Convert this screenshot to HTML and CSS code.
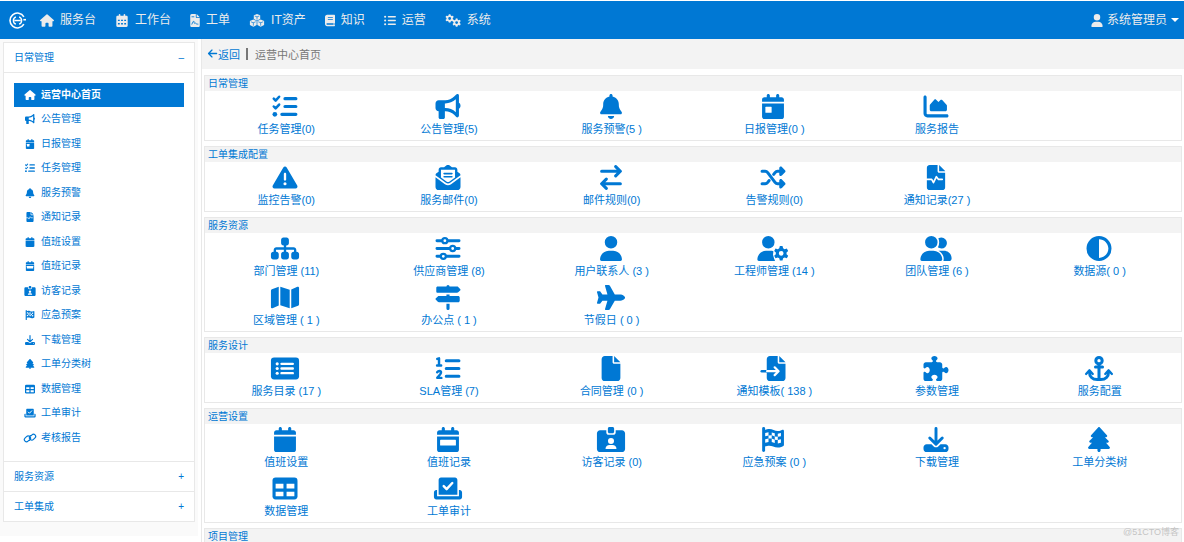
FILE: index.html
```html
<!DOCTYPE html>
<html lang="zh-CN">
<head>
<meta charset="utf-8">
<title>运营中心首页</title>
<link rel="stylesheet" href="styles.css">
</head>
<body>
<svg class="sprite" aria-hidden="true">
  <symbol id="logo" viewBox="0 0 32 32"><g fill="none" stroke="currentColor" stroke-width="3"><path d="M28 9A14 14 0 1 0 28 23"/><path d="M13 9a7.500 7.500 0 0 0 0 14M19 9a7.500 7.500 0 0 1 0 14M10 16h12" stroke-width="2.500"/></g><path d="M27 13h5v3h-5z" fill="currentColor"/></symbol>
  <symbol id="home" viewBox="0 0 576 512"><path d="M544 288h-32v184a40 40 0 0 1-40 40h-88a32 32 0 0 1-32-32v-96a32 32 0 0 0-32-32h-64a32 32 0 0 0-32 32v96a32 32 0 0 1-32 32h-88a40 40 0 0 1-40-40v-184h-32c-30 0-43-38-21-56l256-224a32 32 0 0 1 42 0l256 224c22 18 9 56-21 56z"/></symbol>
  <symbol id="horn" viewBox="0 0 512 512"><path d="M480 32c0-12.900-7.800-24.600-19.800-29.600s-25.700-2.200-34.900 6.900L381.700 53c-48 48-113.100 75-181 75H64c-35.300 0-64 28.700-64 64v96c0 35.300 28.700 64 64 64v128c0 17.700 14.300 32 32 32h64c17.700 0 32-14.300 32-32V352h8.700c67.900 0 133 27 181 75l43.600 43.600c9.200 9.200 22.900 11.900 34.900 6.900s19.800-16.600 19.800-29.600V300.400c18.600-8.800 32-32.500 32-60.400s-13.400-51.600-32-60.400V32zm-64 76.700V371.300C357.200 317.800 280.500 288 200.700 288H192V192h8.700c79.800 0 156.500-29.800 215.300-83.300z"/></symbol>
  <symbol id="tasks" viewBox="0 0 512 512"><path class="line" stroke-width="52" d="M26 96l38 40 72-80M26 256l38 40 72-80"/><circle cx="48" cy="416" r="48"/><path class="line" stroke-width="66" d="M256 96h222M256 256h222M192 416h286"/></symbol>
  <symbol id="bell" viewBox="0 0 448 512"><path d="M224 0c-17.700 0-32 14.300-32 32V51.200C119 66 64 130.600 64 208v18.800c0 47-17.300 92.400-48.500 127.600l-7.400 8.300c-8.400 9.400-10.400 22.900-5.300 34.400S19.400 416 32 416H416c12.600 0 24-7.400 29.200-18.900s3.100-25-5.300-34.400l-7.400-8.300C401.300 319.200 384 273.900 384 226.800V208c0-77.400-55-142-128-156.800V32c0-17.700-14.300-32-32-32zm45.300 493.300c12-12 18.700-28.300 18.700-45.300H160c0 17 6.700 33.300 18.700 45.300s28.300 18.700 45.300 18.700s33.300-6.700 45.300-18.700z"/></symbol>
  <symbol id="cal" viewBox="0 0 448 512"><path d="M96 32V64H48C21.500 64 0 85.500 0 112v48H448V112c0-26.500-21.500-48-48-48H352V32c0-17.700-14.300-32-32-32s-32 14.300-32 32V64H160V32c0-17.700-14.300-32-32-32S96 14.300 96 32zM448 192H0V464c0 26.500 21.500 48 48 48H400c26.500 0 48-21.500 48-48V192z"/></symbol>
  <symbol id="calday" viewBox="0 0 448 512"><use href="#cal" width="448" height="512"/><rect class="hole" x="68" y="262" width="128" height="124" rx="12"/></symbol>
  <symbol id="calweek" viewBox="0 0 448 512"><use href="#cal" width="448" height="512"/><rect class="hole" x="62" y="260" width="324" height="120" rx="12"/></symbol>
  <symbol id="calgrid" viewBox="0 0 448 512"><path d="M96 32V64H48C21.500 64 0 85.500 0 112v48H448V112c0-26.500-21.500-48-48-48H352V32c0-17.700-14.300-32-32-32s-32 14.300-32 32V64H160V32c0-17.700-14.300-32-32-32S96 14.300 96 32zM0 160h448V464c0 26-22 48-48 48H48c-26 0-48-22-48-48z"/><path class="bar-hole" d="M64 224h72v56H64zM188 224h72v56h-72zM312 224h72v56h-72zM64 354h72v56H64zM188 354h72v56h-72zM312 354h72v56h-72z"/></symbol>
  <symbol id="chart" viewBox="0 0 512 512"><path d="M64 64c0-17.700-14.300-32-32-32S0 46.300 0 64V400c0 44.200 35.800 80 80 80H480c17.700 0 32-14.300 32-32s-14.300-32-32-32H80c-8.800 0-16-7.200-16-16V64zM128 320v-84c0-7 2-13 7-19l85-99c10-11 28-12 39-1l47 47 41-41c10-10 27-10 36 1l93 101c3 5 4 11 4 17v78c0 18-14 32-32 32H160c-18 0-32-14-32-32z"/></symbol>
  <symbol id="warn" viewBox="0 0 512 512"><path d="M256 32c14.200 0 27.300 7.500 34.500 19.800l216 368c7.300 12.400 7.300 27.700 .2 40.100S486.300 480 472 480H40c-14.300 0-27.600-7.700-34.700-20.100s-7-27.800 .2-40.100l216-368C228.700 39.500 241.800 32 256 32zm0 128c-13.300 0-24 10.700-24 24V296c0 13.300 10.700 24 24 24s24-10.700 24-24V184c0-13.300-10.700-24-24-24zm32 224a32 32 0 1 0-64 0 32 32 0 1 0 64 0z"/></symbol>
  <symbol id="mail" viewBox="0 0 512 512"><path d="M215 14a64 64 0 0 1 82 0l40 34h63c26 0 48 22 48 48v40l45 35c12 9 19 23 19 37L300 365c-26 20-62 20-88 0L0 208c0-14 7-28 19-37l45-35V96c0-26 22-48 48-48h63zM0 250l193 142c37 28 89 28 126 0l193-142v198c0 35-29 64-64 64H64c-35 0-64-29-64-64z"/><path class="hole" d="M112 96h288v158L281 342c-15 11-35 11-50 0L112 254z"/><path class="line" stroke-width="32" d="M176 176h160M176 240h160"/></symbol>
  <symbol id="swap" viewBox="0 0 448 512"><path class="line" stroke-width="62" d="M32 128h376M320 32l96 96-96 96M416 384H40M128 288l-96 96 96 96"/></symbol>
  <symbol id="shuffle" viewBox="0 0 512 512"><path class="line" stroke-width="62" d="M32 128h64c22 0 38 10 52 28l150 200c14 18 30 28 52 28h112M32 384h64c22 0 38-10 52-28l28-38M270 192l28-36c14-18 30-28 52-28h112"/><path d="M384 64c0-28 34-42 54-22l64 64c13 12 13 32 0 45l-64 64c-20 20-54 6-54-23zM384 320c0-28 34-42 54-22l64 64c13 12 13 32 0 45l-64 64c-20 20-54 6-54-23z"/></symbol>
  <symbol id="file" viewBox="0 0 384 512"><path d="M0 64C0 28.700 28.700 0 64 0H224V128c0 17.700 14.300 32 32 32H384V448c0 35.300-28.700 64-64 64H64c-35.300 0-64-28.700-64-64zM384 128H256V0z"/></symbol>
  <symbol id="filewave" viewBox="0 0 384 512"><use href="#file" width="384" height="512"/><path class="line hole-line" stroke-width="34" d="M0 296h104l36 66 60-122 44 56h76"/></symbol>
  <symbol id="filesign" viewBox="0 0 384 512"><use href="#file" width="384" height="512"/><path class="line bar-line" stroke-width="34" d="M70 400c50-130 84-150 84-80 0 60 30 60 54 30 14 36 50 50 100 50M70 110h80"/></symbol>
  <symbol id="fileimport" viewBox="0 0 512 512"><path d="M128 64c0-35 29-64 64-64h160v128c0 18 14 32 32 32h128v288c0 35-29 64-64 64H192c-35 0-64-29-64-64zM512 128H384V0z"/><path class="line" stroke-width="48" d="M24 312h104"/><path class="line hole-line" stroke-width="46" d="M136 312h216M290 232l80 80-80 80"/></symbol>
  <symbol id="sitemap" viewBox="0 0 576 512"><path d="M208 80c0-27 21-48 48-48h64c27 0 48 21 48 48v64c0 27-21 48-48 48h-8v40h152c31 0 56 25 56 56v32h8c27 0 48 21 48 48v64c0 27-21 48-48 48h-64c-27 0-48-21-48-48v-64c0-27 21-48 48-48h8v-32c0-4-4-8-8-8H312v40h8c27 0 48 21 48 48v64c0 27-21 48-48 48h-64c-27 0-48-21-48-48v-64c0-27 21-48 48-48h8v-40H112c-4 0-8 4-8 8v32h8c27 0 48 21 48 48v64c0 27-21 48-48 48H48c-27 0-48-21-48-48v-64c0-27 21-48 48-48h8v-32c0-31 25-56 56-56h152v-40h-8c-27 0-48-21-48-48z"/></symbol>
  <symbol id="sliders" viewBox="0 0 512 512"><path class="line" stroke-width="60" d="M30 96h452M30 256h452M30 416h452"/><g class="hole ring" stroke-width="46"><circle cx="192" cy="96" r="52"/><circle cx="352" cy="256" r="52"/><circle cx="160" cy="416" r="52"/></g></symbol>
  <symbol id="user" viewBox="0 0 448 512"><path d="M224 256A128 128 0 1 0 224 0a128 128 0 1 0 0 256zm-45.700 48C79.800 304 0 383.800 0 482.300C0 498.700 13.300 512 29.700 512H418.300c16.400 0 29.700-13.300 29.700-29.700C448 383.800 368.200 304 269.700 304H178.300z"/></symbol>
  <symbol id="gear" viewBox="0 0 100 100"><path fill-rule="evenodd" d="M41 2h18l4 15 10 6 15-5 9 16-11 11v11l11 11-9 16-15-5-10 6-4 14H41l-4-14-10-6-15 5-9-16 11-11V45L3 34l9-16 15 5 10-6zM50 34a16 16 0 1 0 0 32 16 16 0 1 0 0-32z"/></symbol>
  <symbol id="usergear" viewBox="0 0 640 512"><path d="M224 256A128 128 0 1 0 224 0a128 128 0 1 0 0 256zM178 304h92c20 0 40 3 58 10l-8 68 22 78 20 52H30c-17 0-30-13-30-30 0-98 80-178 178-178z"/><use href="#gear" x="335" y="195" width="305" height="317"/></symbol>
  <symbol id="users" viewBox="0 0 640 512"><path d="M224 256A128 128 0 1 0 224 0a128 128 0 1 0 0 256zm-46 48C80 304 0 384 0 482c0 17 13 30 30 30h388c17 0 30-13 30-30 0-98-80-178-178-178zM368 48c22-12 44-16 64-16a112 112 0 1 1 0 224c-28 0-54-10-72-24 32-62 32-126 8-184zM370 304h115c86 0 155 70 155 155 0 28-21 53-48 53H472c22-84-18-160-102-208z"/></symbol>
  <symbol id="half" viewBox="0 0 512 512"><path fill-rule="evenodd" d="M448 256c0-106-86-192-192-192V448c106 0 192-86 192-192zM0 256a256 256 0 1 1 512 0A256 256 0 1 1 0 256z"/></symbol>
  <symbol id="map" viewBox="0 0 576 512"><path d="M160 34v384L34 476c-16 7-34-4-34-22V120c0-14 8-26 20-31zM192 34l192 62v382l-192-62zM416 94L542 36c16-7 34 4 34 22v334c0 14-8 26-20 31L416 478z"/></symbol>
  <symbol id="signs" viewBox="0 0 512 512"><path d="M224 32a32 32 0 0 1 64 0h154c8 0 17 3 23 9l39 39c10 9 10 23 0 32l-39 39c-6 6-15 9-23 9H48c-26 0-32-10-32-32V64c0-22 10-32 32-32zM224 192h64v32h176c18 0 32 14 32 32v64c0 18-14 32-32 32H70c-8 0-17-3-23-9L8 304c-10-9-10-23 0-32l39-39c6-6 15-9 23-9h154zM224 384h64v96a32 32 0 0 1-64 0z"/></symbol>
  <symbol id="plane" viewBox="0 0 576 512"><path d="M482.300 192c34.200 0 93.700 29 93.700 64c0 36-59.500 64-93.700 64H365.700L265.200 495.900c-5.700 10-16.300 16.100-27.800 16.100h-56.200c-10.600 0-18.300-10.200-15.400-20.400l49-171.600H112L68.800 377.600c-3 4-7.800 6.400-12.800 6.400H14c-7.800 0-14-6.300-14-14c0-1.300 .2-2.600 .5-3.900L32 256 .5 145.900C.1 144.600 0 143.300 0 142c0-7.800 6.300-14 14-14h42c5 0 9.800 2.400 12.800 6.400L112 192h102.900L165.900 20.400C162.900 10.200 170.600 0 181.200 0h56.200c11.500 0 22.100 6.200 27.800 16.100L365.700 192z"/></symbol>
  <symbol id="catalog" viewBox="0 0 576 512"><rect y="32" width="576" height="448" rx="64"/><g class="hole"><circle cx="128" cy="160" r="32"/><circle cx="128" cy="256" r="32"/><circle cx="128" cy="352" r="32"/></g><path class="line hole-line" stroke-width="48" d="M216 160h232M216 256h232M216 352h232"/></symbol>
  <symbol id="numlist" viewBox="0 0 512 512"><path class="line" stroke-width="62" d="M220 96h260M220 256h260M220 416h260"/><path class="line" stroke-width="50" d="M36 60l36-12v144M32 196h84M34 332c30-42 84-30 78 12-2 20-20 34-76 104h84"/></symbol>
  <symbol id="puzzle" viewBox="0 0 512 512"><path d="M192 104.800c0-9.200-5.800-17.300-13.200-22.800C167.200 73.300 160 61.300 160 48c0-26.500 28.700-48 64-48s64 21.500 64 48c0 13.300-7.200 25.300-18.800 34c-7.400 5.500-13.200 13.600-13.200 22.800c0 12.800 10.400 23.200 23.200 23.200H336c26.500 0 48 21.500 48 48v56.800c0 12.800 10.400 23.200 23.200 23.200c9.200 0 17.300-5.800 22.800-13.200c8.700-11.600 20.700-18.800 34-18.800c26.500 0 48 28.700 48 64s-21.500 64-48 64c-13.300 0-25.300-7.200-34-18.800c-5.500-7.400-13.600-13.200-22.800-13.200c-12.800 0-23.200 10.400-23.200 23.200V464c0 26.500-21.500 48-48 48H279.200c-12.800 0-23.200-10.400-23.200-23.200c0-9.200 5.800-17.300 13.200-22.800c11.600-8.700 18.800-20.700 18.800-34c0-26.500-28.700-48-64-48s-64 21.500-64 48c0 13.300 7.200 25.300 18.800 34c7.400 5.500 13.200 13.600 13.200 22.800c0 12.800-10.400 23.200-23.200 23.200H48c-26.500 0-48-21.500-48-48V343.200C0 330.400 10.400 320 23.200 320c9.200 0 17.300 5.800 22.800 13.200C54.700 344.800 66.700 352 80 352c26.500 0 48-28.700 48-64s-21.500-64-48-64c-13.300 0-25.300 7.200-34 18.800C40.500 250.200 32.400 256 23.200 256C10.400 256 0 245.600 0 232.800V176c0-26.500 21.500-48 48-48H168.800c12.800 0 23.200-10.400 23.200-23.200z"/></symbol>
  <symbol id="anchor" viewBox="0 0 576 512"><circle class="ring" fill="none" stroke-width="62" cx="288" cy="96" r="65"/><path class="line" stroke-width="62" d="M288 170v306M216 224h144M92 320c0 100 60 160 160 160h72c100 0 160-60 160-160"/><path class="line" stroke-width="48" d="M24 368l68-74 68 74M416 368l68-74 68 74"/></symbol>
  <symbol id="badge" viewBox="0 0 576 512"><path d="M256 0h64c18 0 32 14 32 32v64c0 18-14 32-32 32h-64c-18 0-32-14-32-32V32c0-18 14-32 32-32zM64 64h128v48c0 26 22 48 48 48h96c26 0 48-22 48-48V64h128c35 0 64 29 64 64v320c0 35-29 64-64 64H64c-35 0-64-29-64-64V128c0-35 29-64 64-64z"/><g class="hole"><circle cx="288" cy="288" r="62"/><path d="M176 448c0-44 36-78 80-78h64c44 0 80 34 80 78z"/></g></symbol>
  <symbol id="flag" viewBox="0 0 448 512"><path class="line" stroke-width="60" d="M32 32v448"/><path d="M32 64l70-17c45-11 92-6 134 15 46 23 100 26 148 8l32-12c16-8 32 4 32 22v286c0 14-8 26-21 30l-34 13c-54 20-114 17-166-8-38-20-82-24-124-14L32 404z"/><path class="hole" d="M64 122l68-16v66l-68 16zM132 172l66-3v67l-66 2zM198 112l62 18v66l-62-27zM260 196l62 6v66l-62-8zM322 138l64-14v66l-64 12zM64 250l68-12v68l-68 14zM198 236l62 24v66l-62-20zM322 268l64-16v68l-64 16z"/></symbol>
  <symbol id="download" viewBox="0 0 512 512"><path class="line" stroke-width="60" d="M256 32v300M128 224l128 126 128-126"/><path d="M64 352h100l46 46c26 24 66 24 92 0l46-46h100c35 0 64 29 64 64v32c0 35-29 64-64 64H64c-35 0-64-29-64-64v-32c0-35 29-64 64-64z"/><circle class="hole" cx="432" cy="432" r="24"/></symbol>
  <symbol id="tree" viewBox="0 0 448 512"><path d="M210.600 5.900L62 169.400c-3.900 4.200-6 9.800-6 15.500C56 197.700 66.300 208 79.100 208H104L30.600 281.400c-4.200 4.200-6.600 10-6.600 16C24 309.900 34.100 320 46.600 320H80L5.400 409.500C1.900 413.700 0 419 0 424.500c0 13 10.500 23.500 23.500 23.500H192v32c0 17.700 14.300 32 32 32s32-14.300 32-32V448H424.500c13 0 23.500-10.500 23.500-23.500c0-5.500-1.900-10.800-5.400-15L368 320h33.400c12.500 0 22.600-10.100 22.600-22.600c0-6-2.400-11.800-6.600-16L344 208h24.900c12.700 0 23.100-10.300 23.100-23.100c0-5.700-2.100-11.300-6-15.500L237.400 5.900C234 2.100 229.100 0 224 0s-10 2.100-13.400 5.900z"/></symbol>
  <symbol id="table" viewBox="0 0 512 512"><rect y="32" width="512" height="448" rx="64"/><path class="hole" d="M64 160h160v96H64zM288 160h160v96H288zM64 320h160v96H64zM288 320h160v96H288z"/></symbol>
  <symbol id="audit" viewBox="0 0 576 512"><path d="M96 80c0-26 22-48 48-48h288c26 0 48 22 48 48v304H96zM0 336c0-26 22-48 48-48h16v128h448V288h16c26 0 48 22 48 48v96c0 26-22 48-48 48H48c-26 0-48-22-48-48z"/><path class="line hole-line" stroke-width="50" d="M200 208l60 60 116-124"/></symbol>
  <symbol id="link" viewBox="0 0 640 512"><path class="line" stroke-width="60" d="M302 174c-54-44-122-30-160 8L64 260c-44 44-44 112 0 156s112 44 156 0l36-36M338 338c54 44 122 30 160-8l78-78c44-44 44-112 0-156s-112-44-156 0l-36 36M302 174c56 40 70 116 22 168l-40 40M338 338c-56-40-70-116-22-168l40-40"/></symbol>
  <symbol id="cubes" viewBox="0 0 576 512"><path d="M288 0l126 48v152l-126 56-126-56V48zM144 220l130 56v160l-130 68-136-68V276zM432 220l136 56v160l-136 68-130-68V276z"/><path class="line bar-line" stroke-width="26" d="M210 84l78 32 78-32M288 116v90M58 312l86 34 80-34M144 346v100M352 312l80 34 86-34M432 346v100"/></symbol>
  <symbol id="book" viewBox="0 0 448 512"><path fill-rule="evenodd" d="M96 0h320c18 0 32 14 32 32v320c0 14-10 26-22 30v66c30 8 30 64-10 64H96c-53 0-96-43-96-96V96C0 43 43 0 96 0zm0 384c-44 0-44 64 0 64h288v-64zM128 112v32h224v-32zM128 200v32h224v-32z"/></symbol>
  <symbol id="list" viewBox="0 0 512 512"><circle cx="48" cy="96" r="46"/><circle cx="48" cy="256" r="46"/><circle cx="48" cy="416" r="46"/><path class="line" stroke-width="60" d="M190 96h290M190 256h290M190 416h290"/></symbol>
  <symbol id="gears" viewBox="0 0 640 512"><use href="#gear" x="0" y="0" width="370" height="350"/><use href="#gear" x="290" y="162" width="350" height="350"/></symbol>
  <symbol id="back" viewBox="0 0 448 512"><path class="line" stroke-width="60" d="M200 96L40 256l160 160M48 256h368"/></symbol>
</svg>

<header class="topbar">
  <svg class="logo"><use href="#logo"/></svg>
  <nav class="nav">
    <a href="#"><svg class="i14"><use href="#home"/></svg>服务台</a>
    <a href="#"><svg class="i14"><use href="#calgrid"/></svg>工作台</a>
    <a href="#"><svg class="i10"><use href="#filesign"/></svg>工单</a>
    <a href="#"><svg class="i16"><use href="#cubes"/></svg>IT资产</a>
    <a href="#"><svg class="i10"><use href="#book"/></svg>知识</a>
    <a href="#"><svg class="i12"><use href="#list"/></svg>运营</a>
    <a href="#"><svg class="i16"><use href="#gears"/></svg>系统</a>
  </nav>
  <button class="account" type="button"><svg class="i12"><use href="#user"/></svg>系统管理员<span class="caret"></span></button>
</header>

<div class="page">
  <aside class="side">
    <div class="accordion">
      <button class="group" type="button">日常管理<span>–</span></button>
      <ul class="menu">
        <li><a class="active" href="#"><svg><use href="#home"/></svg>运营中心首页</a></li>
        <li><a href="#"><svg><use href="#horn"/></svg>公告管理</a></li>
        <li><a href="#"><svg><use href="#calday"/></svg>日报管理</a></li>
        <li><a href="#"><svg><use href="#tasks"/></svg>任务管理</a></li>
        <li><a href="#"><svg><use href="#bell"/></svg>服务预警</a></li>
        <li><a href="#"><svg><use href="#filewave"/></svg>通知记录</a></li>
        <li><a href="#"><svg><use href="#cal"/></svg>值班设置</a></li>
        <li><a href="#"><svg><use href="#calweek"/></svg>值班记录</a></li>
        <li><a href="#"><svg><use href="#badge"/></svg>访客记录</a></li>
        <li><a href="#"><svg><use href="#flag"/></svg>应急预案</a></li>
        <li><a href="#"><svg><use href="#download"/></svg>下载管理</a></li>
        <li><a href="#"><svg><use href="#tree"/></svg>工单分类树</a></li>
        <li><a href="#"><svg><use href="#table"/></svg>数据管理</a></li>
        <li><a href="#"><svg><use href="#audit"/></svg>工单审计</a></li>
        <li><a href="#"><svg><use href="#link"/></svg>考核报告</a></li>
      </ul>
      <button class="group" type="button">服务资源<span>+</span></button>
      <button class="group" type="button">工单集成<span>+</span></button>
    </div>
  </aside>

  <main class="main">
    <div class="crumbs"><a href="#"><svg><use href="#back"/></svg>返回</a><i></i><span>运营中心首页</span></div>
    <div class="panels">
      <section class="panel"><h2>日常管理</h2><div class="tiles">
        <a href="#"><svg><use href="#tasks"/></svg>任务管理(0)</a>
        <a href="#"><svg><use href="#horn"/></svg>公告管理(5)</a>
        <a href="#"><svg><use href="#bell"/></svg>服务预警(5 )</a>
        <a href="#"><svg><use href="#calday"/></svg>日报管理(0 )</a>
        <a href="#"><svg><use href="#chart"/></svg>服务报告</a>
      </div></section>
      <section class="panel"><h2>工单集成配置</h2><div class="tiles">
        <a href="#"><svg><use href="#warn"/></svg>监控告警(0)</a>
        <a href="#"><svg><use href="#mail"/></svg>服务邮件(0)</a>
        <a href="#"><svg><use href="#swap"/></svg>邮件规则(0)</a>
        <a href="#"><svg><use href="#shuffle"/></svg>告警规则(0)</a>
        <a href="#"><svg><use href="#filewave"/></svg>通知记录(27 )</a>
      </div></section>
      <section class="panel"><h2>服务资源</h2><div class="tiles">
        <a href="#"><svg><use href="#sitemap"/></svg>部门管理 (11)</a>
        <a href="#"><svg><use href="#sliders"/></svg>供应商管理 (8)</a>
        <a href="#"><svg><use href="#user"/></svg>用户联系人 (3 )</a>
        <a href="#"><svg><use href="#usergear"/></svg>工程师管理 (14 )</a>
        <a href="#"><svg><use href="#users"/></svg>团队管理 (6 )</a>
        <a href="#"><svg><use href="#half"/></svg>数据源( 0 )</a>
        <a href="#"><svg><use href="#map"/></svg>区域管理 ( 1 )</a>
        <a href="#"><svg><use href="#signs"/></svg>办公点 ( 1 )</a>
        <a href="#"><svg><use href="#plane"/></svg>节假日 ( 0 )</a>
      </div></section>
      <section class="panel"><h2>服务设计</h2><div class="tiles">
        <a href="#"><svg><use href="#catalog"/></svg>服务目录 (17 )</a>
        <a href="#"><svg><use href="#numlist"/></svg>SLA管理 (7)</a>
        <a href="#"><svg><use href="#file"/></svg>合同管理 (0 )</a>
        <a href="#"><svg><use href="#fileimport"/></svg>通知模板( 138 )</a>
        <a href="#"><svg><use href="#puzzle"/></svg>参数管理</a>
        <a href="#"><svg><use href="#anchor"/></svg>服务配置</a>
      </div></section>
      <section class="panel"><h2>运营设置</h2><div class="tiles">
        <a href="#"><svg><use href="#cal"/></svg>值班设置</a>
        <a href="#"><svg><use href="#calweek"/></svg>值班记录</a>
        <a href="#"><svg><use href="#badge"/></svg>访客记录 (0)</a>
        <a href="#"><svg><use href="#flag"/></svg>应急预案 (0 )</a>
        <a href="#"><svg><use href="#download"/></svg>下载管理</a>
        <a href="#"><svg><use href="#tree"/></svg>工单分类树</a>
        <a href="#"><svg><use href="#table"/></svg>数据管理</a>
        <a href="#"><svg><use href="#audit"/></svg>工单审计</a>
      </div></section>
      <section class="panel"><h2>项目管理</h2></section>
    </div>
  </main>
</div>
<div class="watermark">@51CTO博客</div>
</body>
</html>
```
FILE: styles.css
```css
* { box-sizing: border-box; }

:root {
  --blue: #0078d4;
  --line: #e8e8e8;
  --grey: #f3f3f3;
}

body {
  margin: 0;
  height: 100vh;
  overflow: hidden;
  display: flex;
  flex-direction: column;
  background: #fff;
  color: var(--blue);
  font-family: "Liberation Sans", "Noto Sans CJK SC", sans-serif;
  font-size: 11px;
}

a { color: inherit; text-decoration: none; }

button {
  border: 0;
  padding: 0;
  background: none;
  color: inherit;
  font: inherit;
  cursor: pointer;
}

svg { display: block; flex: none; fill: currentColor; }
.sprite { position: absolute; width: 0; height: 0; }
.line { fill: none; stroke: currentColor; stroke-linecap: round; stroke-linejoin: round; }
.ring { stroke: currentColor; }
.hole { fill: #fff; }
.hole-line { stroke: #fff; }
.bar-hole { fill: var(--blue); }
.bar-line { stroke: var(--blue); }

/* Top bar */
.topbar {
  display: flex;
  align-items: center;
  flex: none;
  height: 38px;
  margin-top: 1px;
  padding: 0 5px 0 9px;
  background: var(--blue);
  color: #ececec;
  font-size: 12px;
}
.logo { width: 17px; height: 17px; color: #fff; }
.nav { display: flex; gap: 19px; margin-left: 14px; }
.nav a, .account { display: flex; align-items: center; gap: 6px; line-height: 20px; }
.nav svg, .account svg { height: 13px; }
.i10 { width: 10px; }
.i12 { width: 12px; }
.i14 { width: 14px; }
.i16 { width: 16px; }
.account { gap: 4px; margin-left: auto; }
.caret { border: 4px solid transparent; border-top-color: #fff; border-bottom: 0; }

/* Side menu */
.page { display: flex; align-items: flex-start; flex: 1; min-height: 0; }
.side { flex: none; width: 198px; padding: 3px 3px 14px; background: #fafafa; }
.accordion { border: 1px solid var(--line); background: #fff; font-size: 10px; }
.group {
  display: flex;
  justify-content: space-between;
  width: 100%;
  padding: 0 10px;
  line-height: 29px;
}
.menu + .group, .group + .group { border-top: 1px solid var(--line); }
.menu {
  margin: 0;
  padding: 10px 10px 11px;
  border-top: 1px solid var(--line);
  list-style: none;
}
.menu a { display: flex; align-items: center; gap: 4px; padding-left: 9px; line-height: 24px; }
.menu li:nth-child(even) { padding-bottom: 1px; }
.menu svg { width: 14px; height: 10px; }
.menu .active { background: var(--blue); color: #fff; font-weight: bold; }

/* Content */
.main { flex: 1; min-width: 0; margin-left: 3px; border-left: 1px solid var(--line); }
.crumbs {
  display: flex;
  align-items: center;
  height: 30px;
  padding: 0 5px 1px;
  background: var(--grey);
  color: #777;
}
.crumbs a { display: flex; align-items: center; color: var(--blue); }
.crumbs svg { width: 11px; height: 11px; }
.crumbs i { width: 2px; height: 12px; margin: 0 7px 0 6px; background: #777; }
.panels { display: flex; flex-direction: column; gap: 5px; padding: 6px 2px 0; }
.panel { border: 1px solid var(--line); }
.panel h2 {
  margin: 0;
  padding-left: 3px;
  background: var(--grey);
  font-size: 10px;
  font-weight: normal;
  line-height: 15px;
}
.tiles { display: grid; grid-template-columns: repeat(6, 1fr); }
.tiles a {
  display: flex;
  flex-direction: column;
  align-items: center;
  padding: 3px 0 1px;
  line-height: 20px;
  white-space: pre;
}
.tiles svg { width: 32px; height: 25px; margin-right: 2px; }

.watermark {
  position: absolute;
  right: 5px;
  bottom: 4px;
  color: #c4c4c4;
  font-size: 9px;
  line-height: 12px;
}
```
